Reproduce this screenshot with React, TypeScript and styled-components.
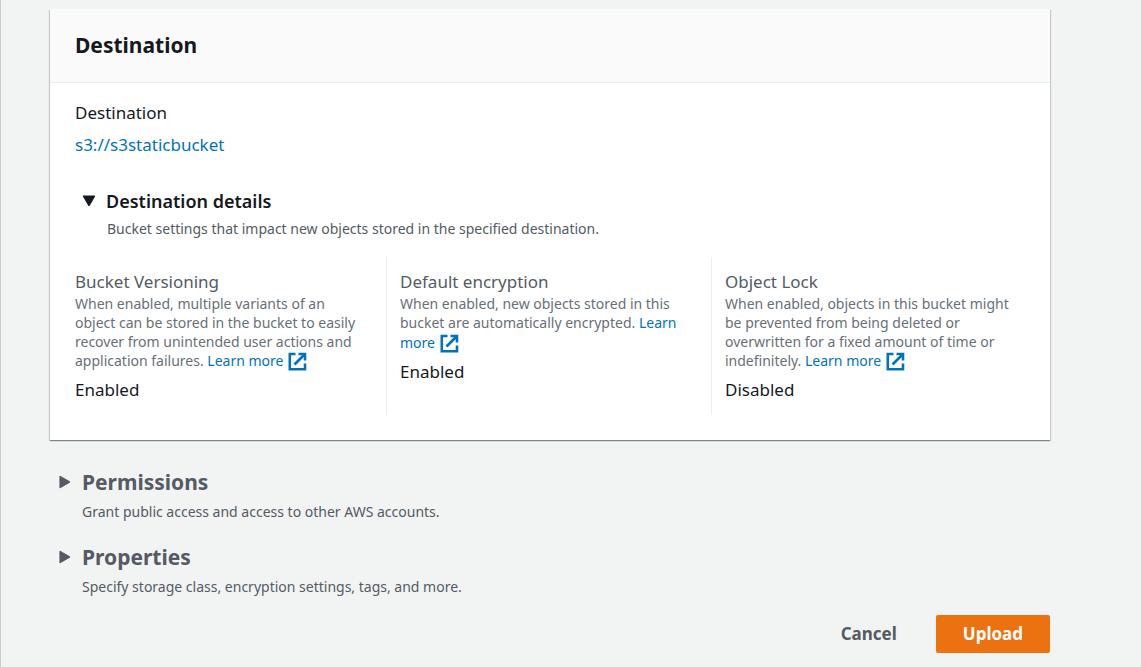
import React, { useState } from "react";
import styled, { createGlobalStyle } from "styled-components";

const GlobalStyle = createGlobalStyle`
  *, *::before, *::after { box-sizing: border-box; }
  body {
    margin: 0;
    background: #f2f3f3;
    color: #16191f;
    font-family: "Noto Sans", "Open Sans", sans-serif;
    font-size: 17px;
    line-height: 28px;
  }
  h2, h3, p, dl, dt, dd { margin: 0; }
`;

const Page = styled.main`
  min-height: 100vh;
  padding: 9px 91px 14px 49px;
  border-left: 1px solid #c6cccf;
`;

const Card = styled.section`
  background: #ffffff;
  box-shadow:
    0 1px 1px 0 rgba(0, 28, 36, 0.3),
    1px 1px 1px 0 rgba(0, 28, 36, 0.15),
    -1px 1px 1px 0 rgba(0, 28, 36, 0.15);
`;

const CardHeader = styled.header`
  padding: 22px 25px 23px;
  background: #fafafa;
  border-bottom: 1px solid #eaeded;
`;

const SectionTitle = styled.h2`
  font-size: 21px;
  font-weight: 700;
  line-height: 28px;
`;

const CardBody = styled.div`
  padding: 16px 25px 25px;
`;

const Field = styled.div`
  display: flex;
  flex-direction: column;
  align-items: flex-start;
  gap: 4px;
`;

const Link = styled.a`
  color: #0073bb;
  line-height: 20px;
  text-decoration: none;
  &:hover { text-decoration: underline; }
`;

const BucketLink = styled(Link)`
  line-height: 28px;
`;

const ExternalIcon = styled.svg`
  width: 19px;
  height: 19px;
  margin-left: 5px;
  vertical-align: -5px;
`;

const Details = styled.section`
  margin-top: 28px;
`;

const Toggle = styled.button<{ $size: "small" | "large" }>`
  display: flex;
  align-items: center;
  gap: 10px;
  padding: 0 0 0 ${(p) => (p.$size === "small" ? 7 : 8)}px;
  border: 0;
  background: none;
  color: inherit;
  font: inherit;
  cursor: pointer;
`;

const Caret = styled.svg<{ $open: boolean }>`
  width: 14px;
  height: 14px;
  transform: ${(p) => (p.$open ? "rotate(90deg)" : "none")};
`;

const DetailsTitle = styled.h3`
  font-size: 18px;
  font-weight: 600;
  line-height: 28px;
`;

const Hint = styled.p`
  padding-left: 32px;
  color: #545b64;
  font-size: 14px;
  line-height: 28px;
`;

const Columns = styled.dl`
  display: grid;
  grid-template-columns: repeat(3, 1fr);
  margin: 14px -11px 0 -14px;
`;

const Column = styled.div`
  padding: 12px 20px 11px 13px;
  border-left: 1px solid #eaeded;
  &:first-child { border-left-color: transparent; }
`;

const ColumnLabel = styled.dt`
  color: #545b64;
  line-height: 25px;
`;

const ColumnText = styled.p`
  color: #687078;
  font-size: 14px;
  line-height: 19px;
`;

const ColumnValue = styled.dd`
  padding-top: 5px;
`;

const Collapsed = styled.section`
  display: flex;
  flex-direction: column;
  gap: 2px;
  margin-top: 17px;
  color: #545b64;
`;

const Sections = styled.div`
  padding-top: 11px;
`;

const Actions = styled.footer`
  display: flex;
  justify-content: flex-end;
  gap: 12px;
  margin-top: 14px;
`;

const Button = styled.button<{ $primary?: boolean }>`
  height: 38px;
  padding: 0 27px;
  border: 0;
  border-radius: 2px;
  background: ${(p) => (p.$primary ? "#ec7211" : "transparent")};
  color: ${(p) => (p.$primary ? "#ffffff" : "#545b64")};
  font: inherit;
  font-weight: 700;
  cursor: pointer;
`;

const TriangleIcon = ({ open }: { open: boolean }) => (
  <Caret $open={open} viewBox="0 0 14 14" aria-hidden="true">
    <path
      d="M2.2 1.6 L11.3 7 L2.2 12.4 Z"
      fill="currentColor"
      stroke="currentColor"
      strokeWidth="1.6"
      strokeLinejoin="round"
    />
  </Caret>
);

const LearnMore = () => (
  <Link href="#learn-more">
    Learn more
    <ExternalIcon viewBox="0 0 19 19" fill="none" stroke="currentColor" strokeWidth="2.6" aria-hidden="true">
      <path d="M7.5 2 H1.8 V17.2 H17 V11.5" />
      <path d="M10.5 2 H17 V8.5" />
      <path d="M16.5 2.5 L6.5 12.5" />
    </ExternalIcon>
  </Link>
);

const settings = [
  {
    label: "Bucket Versioning",
    text: "When enabled, multiple variants of an object can be stored in the bucket to easily recover from unintended user actions and application failures.",
    value: "Enabled",
  },
  {
    label: "Default encryption",
    text: "When enabled, new objects stored in this bucket are automatically encrypted.",
    value: "Enabled",
  },
  {
    label: "Object Lock",
    text: "When enabled, objects in this bucket might be prevented from being deleted or overwritten for a fixed amount of time or indefinitely.",
    value: "Disabled",
  },
];

const sections = [
  { title: "Permissions", hint: "Grant public access and access to other AWS accounts." },
  { title: "Properties", hint: "Specify storage class, encryption settings, tags, and more." },
];

export default function App() {
  const [open, setOpen] = useState(true);
  return (
    <>
      <GlobalStyle />
      <Page>
        <Card>
          <CardHeader>
            <SectionTitle>Destination</SectionTitle>
          </CardHeader>
          <CardBody>
            <Field>
              <span>Destination</span>
              <BucketLink href="#bucket">s3://s3staticbucket</BucketLink>
            </Field>
            <Details>
              <Toggle $size="small" type="button" aria-expanded={open} onClick={() => setOpen(!open)}>
                <TriangleIcon open={open} />
                <DetailsTitle>Destination details</DetailsTitle>
              </Toggle>
              <Hint>Bucket settings that impact new objects stored in the specified destination.</Hint>
              {open && (
                <Columns>
                  {settings.map((s) => (
                    <Column key={s.label}>
                      <ColumnLabel>{s.label}</ColumnLabel>
                      <dd>
                        <ColumnText>
                          {s.text} <LearnMore />
                        </ColumnText>
                      </dd>
                      <ColumnValue>{s.value}</ColumnValue>
                    </Column>
                  ))}
                </Columns>
              )}
            </Details>
          </CardBody>
        </Card>
        <Sections>
          {sections.map((s) => (
            <Collapsed key={s.title}>
              <Toggle $size="large" type="button" aria-expanded={false}>
                <TriangleIcon open={false} />
                <SectionTitle>{s.title}</SectionTitle>
              </Toggle>
              <Hint>{s.hint}</Hint>
            </Collapsed>
          ))}
        </Sections>
        <Actions>
          <Button type="button">Cancel</Button>
          <Button type="button" $primary>
            Upload
          </Button>
        </Actions>
      </Page>
    </>
  );
}
